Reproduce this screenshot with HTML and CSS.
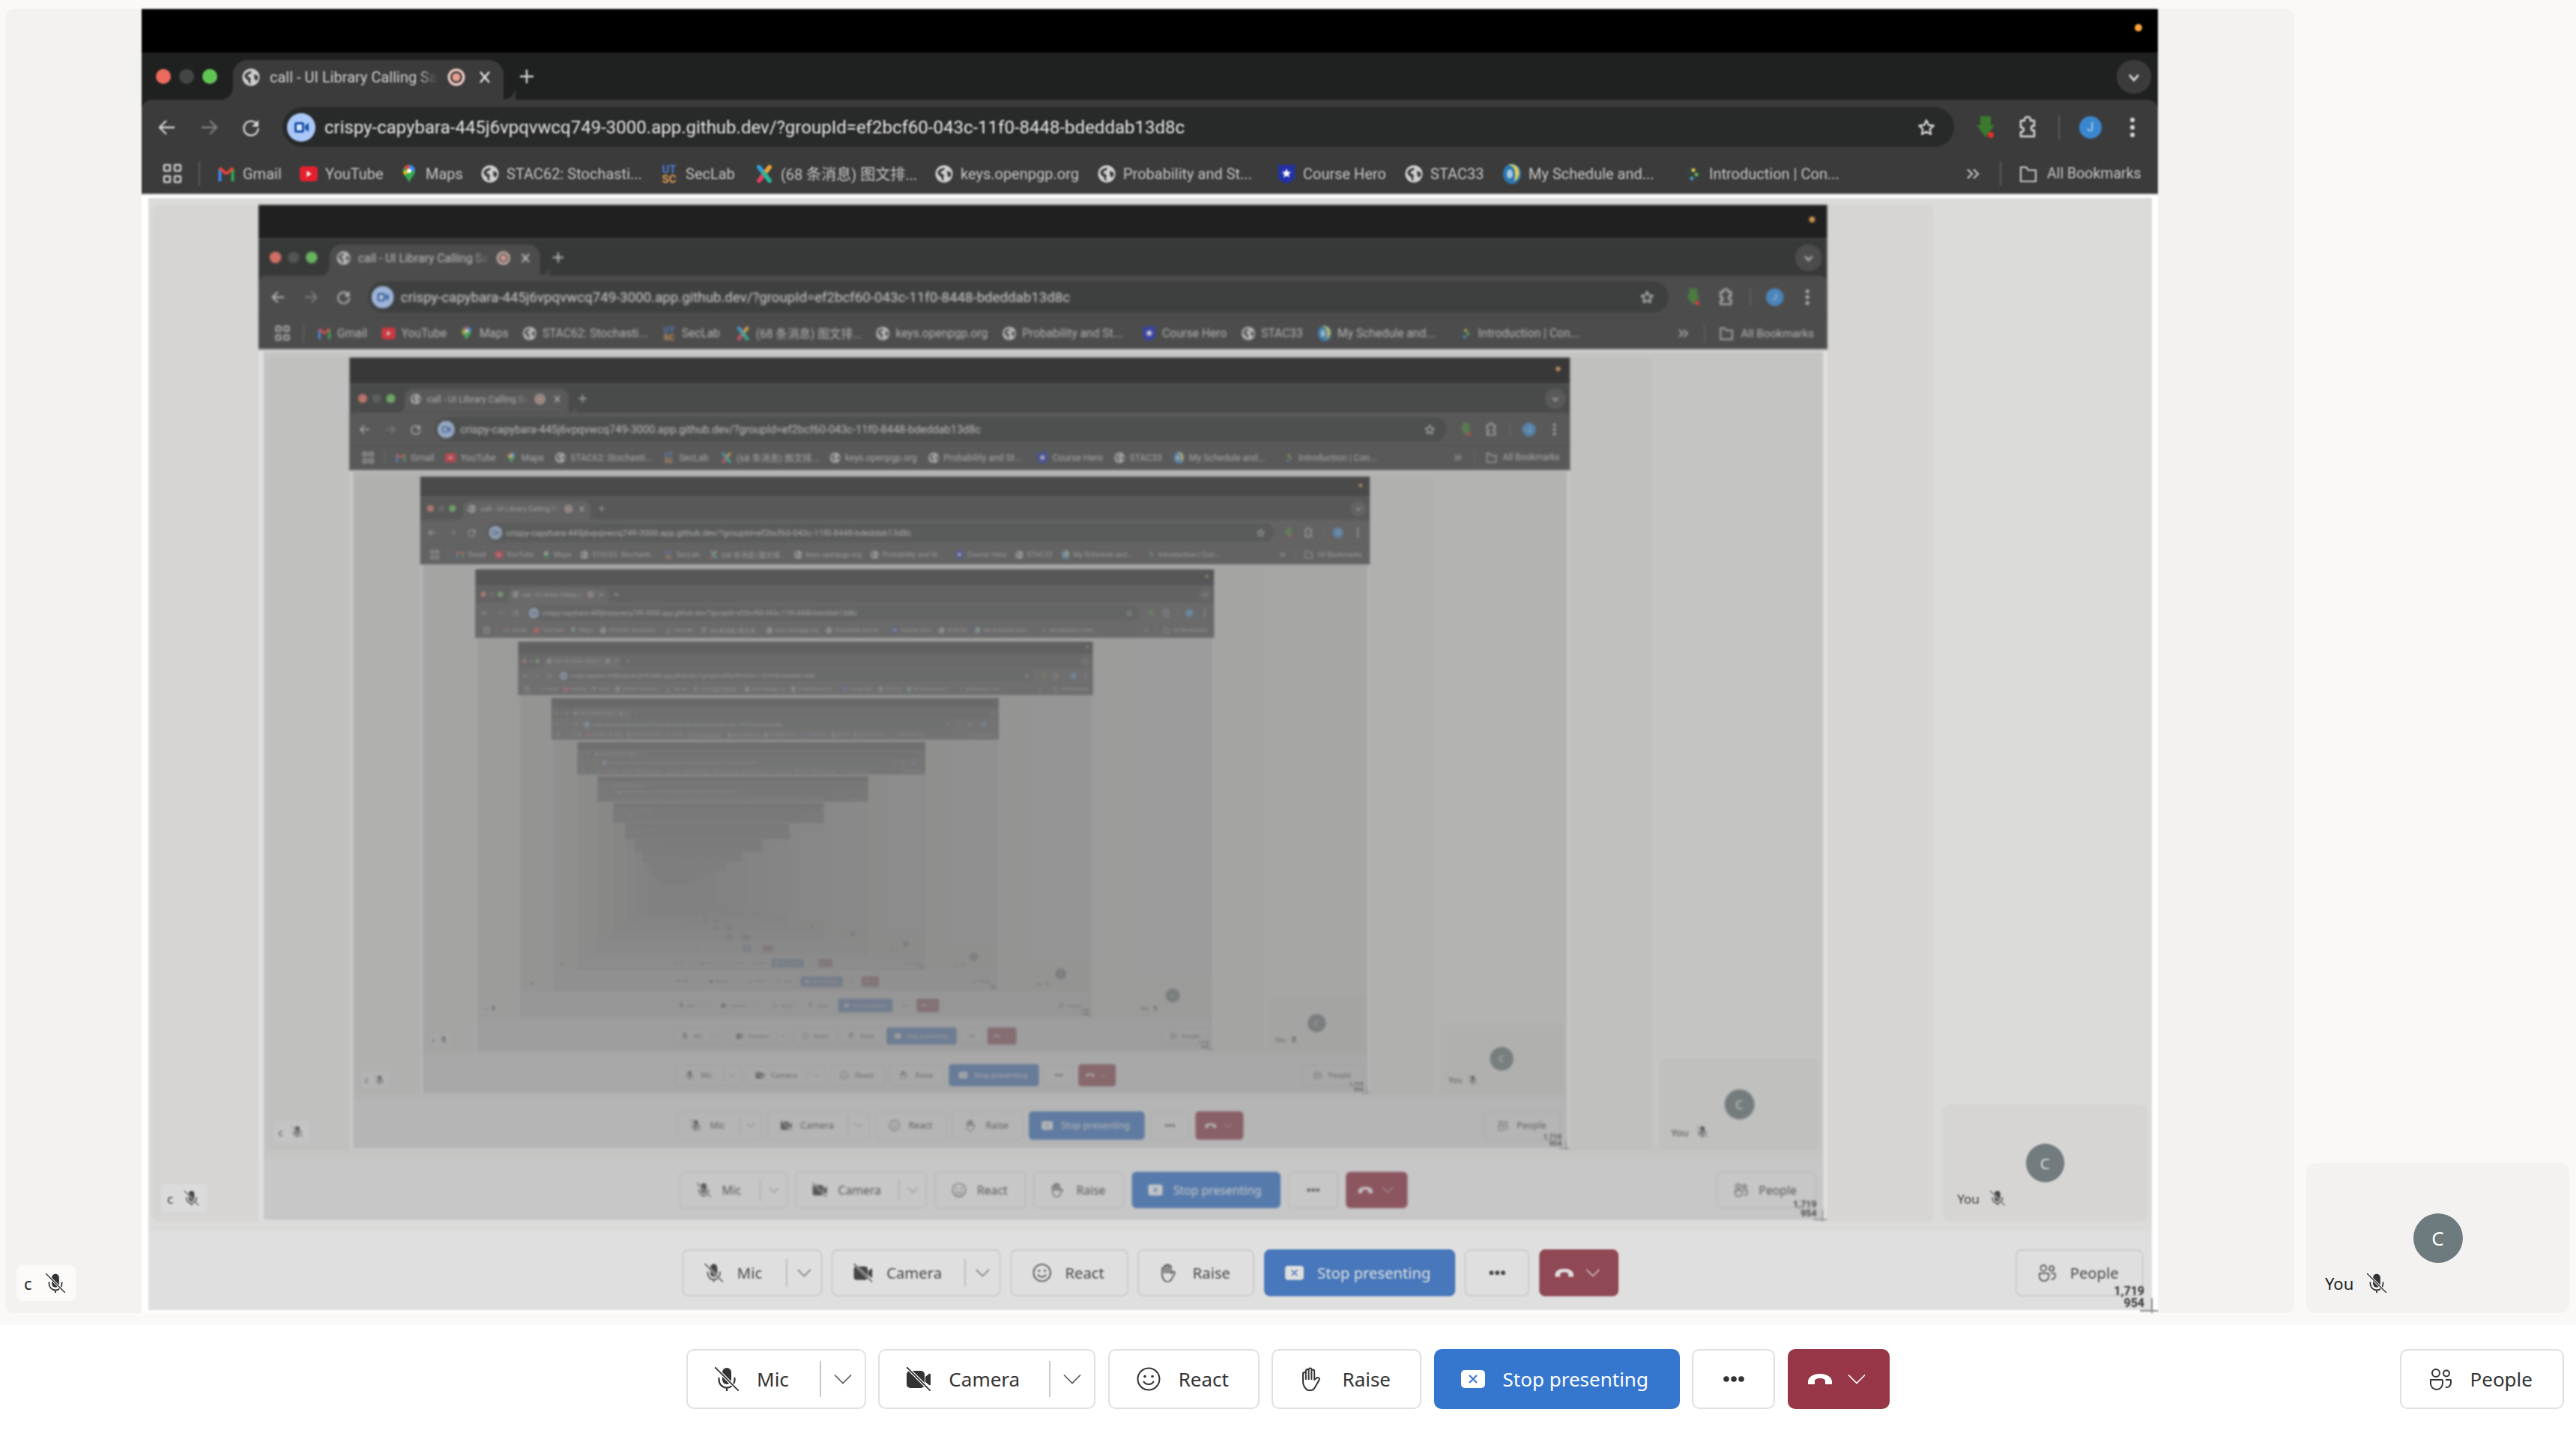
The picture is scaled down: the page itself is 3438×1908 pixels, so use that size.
FILE: index.html
```html
<!DOCTYPE html>
<html lang="en">
<head>
<meta charset="utf-8">
<title>call - UI Library Calling Sample</title>
<link rel="stylesheet" href="styles.css">
</head>
<body>
<svg class="defs" aria-hidden="true">
  <symbol id="i-mic" viewBox="0 0 32 32"><path fill="currentColor" d="M16 1a6 6 0 0 0-6 6v10a6 6 0 0 0 12 0V7a6 6 0 0 0-6-6z"/><path fill="none" stroke="currentColor" stroke-width="2.2" d="M5.5 14v3a10.500 10.500 0 0 0 21 0v-3M16 27.500V32"/><path stroke="#fff" stroke-width="4" d="M2 2l28 28"/><path stroke="currentColor" stroke-width="1.800" d="M0 0l32 32"/></symbol>
  <symbol id="i-cam" viewBox="0 0 32 32"><rect x="0" y="5" width="24" height="23" rx="5" fill="currentColor"/><path fill="currentColor" d="M25 13l5-4q2-1 2 1v13q0 2-2 1l-5-4z"/><path stroke="#fff" stroke-width="4" d="M2 2l28 28"/><path stroke="currentColor" stroke-width="1.800" d="M0 0l32 32"/></symbol>
  <symbol id="i-react" viewBox="0 0 32 32"><circle cx="16" cy="16" r="14.500" fill="none" stroke="currentColor" stroke-width="2"/><circle cx="11" cy="12.500" r="1.800" fill="currentColor"/><circle cx="21" cy="12.500" r="1.800" fill="currentColor"/><path fill="none" stroke="currentColor" stroke-width="2" stroke-linecap="round" d="M9.500 19.500c2.500 4.500 10.500 4.500 13 0"/></symbol>
  <symbol id="i-hand" viewBox="0 0 32 32"><path fill="none" stroke="currentColor" stroke-width="2" stroke-linejoin="round" d="M8 29C5 26 4 23 4 19V9a1.900 1.900 0 0 1 3.800 0V5a1.900 1.900 0 0 1 3.800 0V3.500a1.900 1.900 0 0 1 3.800 0V5.500a1.900 1.900 0 0 1 3.800 0V17l3-2.500c2-1.500 4.500.5 3.500 2.500L20 27c-1 2-3 4-6 4h-3c-1 0-2-.8-3-2zM7.800 9v8M11.600 5v12M15.400 4v13"/></symbol>
  <symbol id="i-stop" viewBox="0 0 32 32"><rect x="0" y="4" width="32" height="24" rx="5" fill="#fff"/><path fill="none" stroke="#3576cf" stroke-width="2" d="M11 11l10 10M21 11L11 21"/></symbol>
  <symbol id="i-people" viewBox="0 0 32 32"><g fill="none" stroke="currentColor" stroke-width="2"><circle cx="10" cy="8" r="5"/><circle cx="24" cy="8.500" r="4"/><path d="M3 17h15a1 1 0 0 1 1 1v4a8 8 0 0 1-16 0v-4a1 1 0 0 1 0-1z"/><path d="M23 17h6a1 1 0 0 1 1 1v3a6 6 0 0 1-7 6"/></g></symbol>
  <symbol id="i-chev" viewBox="0 0 24 14"><path fill="none" stroke="currentColor" stroke-width="1.600" d="M1 1.500l11 11 11-11"/></symbol>
  <symbol id="i-phone" viewBox="0 0 32 14"><path fill="currentColor" d="M0 14v-3C0 4 7 0 16 0s16 4 16 11v3h-9v-4c0-3-3-4-7-4s-7 1-7 4v4z"/></symbol>
  <symbol id="i-dots" viewBox="0 0 28 8"><g fill="currentColor"><circle cx="4" cy="4" r="3.800"/><circle cx="14" cy="4" r="3.800"/><circle cx="24" cy="4" r="3.800"/></g></symbol>
  <symbol id="i-globe" viewBox="0 0 24 24"><circle cx="12" cy="12" r="11.500" fill="#cfcfcf"/><path fill="#3b3b3b" d="M5 7c2-2 5-3 8-3l-1 3-3 1-2 3 3 1 2 2-1 4 1 3-3-1-1-4-3-2-2-4zM16 8l5 2 .5 4-3 3-2-3z"/></symbol>
  <symbol id="i-rec" viewBox="0 0 24 24"><circle cx="12" cy="12" r="11.500" fill="#eecac1"/><circle cx="12" cy="12" r="8" fill="#3b3b3b"/><circle cx="12" cy="12" r="5.500" fill="#e79f93"/></symbol>
  <symbol id="i-x" viewBox="0 0 24 24"><path fill="none" stroke="currentColor" stroke-width="2.400" d="M6 5l12 14M18 5L6 19"/></symbol>
  <symbol id="i-plus" viewBox="0 0 24 24"><path fill="none" stroke="currentColor" stroke-width="2.400" d="M12 3v18M3 12h18"/></symbol>
  <symbol id="i-down" viewBox="0 0 24 24"><path fill="none" stroke="currentColor" stroke-width="2.800" d="M6 9l6 7 6-7"/></symbol>
  <symbol id="i-back" viewBox="0 0 24 24"><path fill="none" stroke="currentColor" stroke-width="2.400" d="M22 12H3M11 3l-9 9 9 9"/></symbol>
  <symbol id="i-fwd" viewBox="0 0 24 24"><path fill="none" stroke="currentColor" stroke-width="2.400" d="M2 12h19M13 3l9 9-9 9"/></symbol>
  <symbol id="i-reload" viewBox="0 0 24 24"><path fill="none" stroke="currentColor" stroke-width="2.400" d="M20 8a9.500 9.500 0 1 0 1.500 5"/><path fill="currentColor" d="M22 2v9h-9z"/></symbol>
  <symbol id="i-video" viewBox="0 0 38 38"><circle cx="19" cy="19" r="19" fill="#a9c7f7"/><rect x="10" y="12" width="13" height="14" rx="2.500" fill="#174ea6"/><rect x="13" y="15" width="7" height="8" fill="#d8e6fb"/><path fill="#174ea6" d="M24 17l5-4v12l-5-4z"/></symbol>
  <symbol id="i-star" viewBox="0 0 24 24"><path fill="none" stroke="currentColor" stroke-width="2.200" stroke-linejoin="round" d="M12 2.500l2.900 6.300 6.800.8-5 4.700 1.300 6.800-6-3.400-6 3.400 1.300-6.800-5-4.700 6.800-.8z"/></symbol>
  <symbol id="i-ext" viewBox="0 0 24 30"><path fill="#3a7a2e" d="M5 0h14v12h5L12 28 0 12h5z"/><circle cx="19" cy="25" r="4" fill="#e0302a"/></symbol>
  <symbol id="i-puzzle" viewBox="0 0 24 30"><path fill="none" stroke="currentColor" stroke-width="2.400" stroke-linejoin="round" d="M3 6h5V4a4 3 0 0 1 8 0v2h5v7h-2a2 3 0 0 0 0 6h2v8H3v-6h1a3 3 0 0 0 0-6H3z"/></symbol>
  <symbol id="i-kebab" viewBox="0 0 8 28"><g fill="currentColor"><circle cx="4" cy="4" r="3"/><circle cx="4" cy="14" r="3"/><circle cx="4" cy="24" r="3"/></g></symbol>
  <symbol id="i-apps" viewBox="0 0 28 28"><g fill="none" stroke="currentColor" stroke-width="2.600"><rect x="3" y="2" width="8" height="8" rx="1"/><rect x="17" y="2" width="8" height="8" rx="1"/><rect x="3" y="17" width="8" height="8" rx="1"/><rect x="17" y="17" width="8" height="8" rx="1"/></g></symbol>
  <symbol id="i-gmail" viewBox="0 0 24 24"><g fill="none" stroke-width="4"><path stroke="#4285f4" d="M3.500 22V5"/><path stroke="#34a853" d="M20.500 22V5"/><path stroke="#ea4335" d="M3 4l9 8"/><path stroke="#ea4335" d="M21 4l-9 8"/></g></symbol>
  <symbol id="i-yt" viewBox="0 0 24 24"><rect x="0" y="2" width="24" height="20" rx="4.500" fill="#e5202e"/><path fill="#fff" d="M9.500 8l6 4-6 4z"/></symbol>
  <symbol id="i-maps" viewBox="0 0 24 24"><path fill="#34a853" d="M12 0c-5 0-8 4-8 8 0 6 6 9 8 16 2-7 8-10 8-16 0-4-3-8-8-8z"/><path fill="#4285f4" d="M12 0c5 0 8 4 8 8h-8z"/><path fill="#ea4335" d="M5 4c1.500-2.500 4-4 7-4v8z"/><path fill="#fbbc04" d="M4 8h8l-6 6c-1-2-2-4-2-6z"/><circle cx="12" cy="8" r="3" fill="#fff"/></symbol>
  <symbol id="i-xlogo" viewBox="0 0 24 24"><g fill="none" stroke-width="6" stroke-linecap="round"><path stroke="#2f9fd6" d="M5 3l7 9"/><path stroke="#e0415f" d="M12 12l-7 9"/><path stroke="#e8a23a" d="M19 3l-7 9"/><path stroke="#26b79a" d="M12 12l7 9"/></g></symbol>
  <symbol id="i-hero" viewBox="0 0 24 28"><path fill="#2230a8" d="M1 1l6 2 5-2 5 2 6-2v17c0 4-6 7-11 9C7 25 1 22 1 18z"/><path fill="#fff" d="M12 7l1.800 4.200 4.500.3-3.500 2.900 1.200 4.400-4-2.400-4 2.400 1.200-4.400-3.500-2.900 4.500-.3z"/></symbol>
  <symbol id="i-sched" viewBox="0 0 24 28"><ellipse cx="12" cy="14" rx="12" ry="13.500" fill="#2f78b5"/><path fill="#dccb55" d="M7 2c8 1 11 8 8 22 7-4 8-12 5-18-3-4-9-6-13-4z"/><ellipse cx="9" cy="14" rx="4" ry="6" fill="#a8c8de"/></symbol>
  <symbol id="i-intro" viewBox="0 0 24 24"><circle cx="12" cy="12" r="10" fill="#37413d"/><circle cx="13" cy="7" r="2.500" fill="#e6c84a"/><circle cx="17" cy="13" r="2.500" fill="#63b54f"/><circle cx="11" cy="18" r="2.500" fill="#4a90c2"/></symbol>
  <symbol id="i-folder" viewBox="0 0 24 24"><path fill="none" stroke="currentColor" stroke-width="2.200" stroke-linejoin="round" d="M2 3h7l3 4h10v15H2z"/></symbol>
  <symbol id="i-more" viewBox="0 0 24 24"><path fill="none" stroke="currentColor" stroke-width="2.200" d="M5 6l6 6-6 6M13 6l6 6-6 6"/></symbol>
</svg>

<div class="page" id="root">
  <div class="stage">
    <section class="tile tile-main">
      <div class="frame">
        <div class="menubar"><span class="orange"></span></div>
        <div class="chrome">
          <div class="tabstrip">
            <div class="lights"><span class="light red"></span><span class="light off"></span><span class="light green"></span></div>
            <div class="tab">
              <svg class="ic24"><use href="#i-globe"/></svg>
              <span class="tabtitle">call - UI Library Calling Sa</span>
              <svg class="ic24 tabrec"><use href="#i-rec"/></svg>
              <svg class="ic24 tabx"><use href="#i-x"/></svg>
            </div>
            <svg class="ic24 newtab"><use href="#i-plus"/></svg>
            <span class="tabscroll"><svg class="ic24"><use href="#i-down"/></svg></span>
          </div>
          <div class="toolbar">
            <span class="nav"><svg class="ic24"><use href="#i-back"/></svg></span>
            <span class="nav dim"><svg class="ic24"><use href="#i-fwd"/></svg></span>
            <span class="nav"><svg class="ic24"><use href="#i-reload"/></svg></span>
            <div class="omni">
              <svg class="ic38"><use href="#i-video"/></svg>
              <span class="url">crispy-capybara-445j6vpqvwcq749-3000.app.github.dev/?groupId=ef2bcf60-043c-11f0-8448-bdeddab13d8c</span>
              <svg class="ic24 omnistar"><use href="#i-star"/></svg>
            </div>
            <div class="tools">
              <span class="nav"><svg class="ic-tall"><use href="#i-ext"/></svg></span>
              <span class="nav"><svg class="ic-tall"><use href="#i-puzzle"/></svg></span>
              <span class="vsep"></span>
              <span class="profile">J</span>
              <svg class="kebab"><use href="#i-kebab"/></svg>
            </div>
          </div>
          <div class="bookmarks">
            <svg class="apps"><use href="#i-apps"/></svg>
            <span class="vsep"></span>
            <div class="marks">
              <span class="mark"><svg class="ic24"><use href="#i-gmail"/></svg>Gmail</span>
              <span class="mark"><svg class="ic24"><use href="#i-yt"/></svg>YouTube</span>
              <span class="mark"><svg class="ic24"><use href="#i-maps"/></svg>Maps</span>
              <span class="mark"><svg class="ic24"><use href="#i-globe"/></svg>STAC62: Stochasti...</span>
              <span class="mark"><svg class="ic24 seclab" viewBox="0 0 24 24"><text x="12" y="11" text-anchor="middle" class="ut">UT</text><text x="12" y="24" text-anchor="middle" class="sc">SC</text></svg>SecLab</span>
              <span class="mark"><svg class="ic24"><use href="#i-xlogo"/></svg>(68 条消息) 图文排...</span>
              <span class="mark"><svg class="ic24"><use href="#i-globe"/></svg>keys.openpgp.org</span>
              <span class="mark"><svg class="ic24"><use href="#i-globe"/></svg>Probability and St...</span>
              <span class="mark"><svg class="ic24 ic28"><use href="#i-hero"/></svg>Course Hero</span>
              <span class="mark"><svg class="ic24"><use href="#i-globe"/></svg>STAC33</span>
              <span class="mark"><svg class="ic24 ic28"><use href="#i-sched"/></svg>My Schedule and...</span>
              <span class="mark"><svg class="ic24"><use href="#i-intro"/></svg>Introduction | Con...</span>
              <svg class="ic24 overflowmark"><use href="#i-more"/></svg>
              <span class="vsep"></span>
              <span class="mark allmarks"><svg class="ic24"><use href="#i-folder"/></svg>All Bookmarks</span>
            </div>
          </div>
        </div>
        <div class="inner"><div class="slot"></div></div>
        <div class="measure">1,719<br>954</div>
      </div>
      <div class="label chip"><span>c</span><svg class="ic-label"><use href="#i-mic"/></svg></div>
    </section>
    <aside class="tile tile-you">
      <span class="avatar">C</span>
      <div class="label"><span>You</span><svg class="ic-label"><use href="#i-mic"/></svg></div>
    </aside>
  </div>
  <footer class="bar">
    <div class="controls">
      <button class="btn wide-mic"><svg class="ic32"><use href="#i-mic"/></svg>Mic<span class="split"><svg class="chev"><use href="#i-chev"/></svg></span></button>
      <button class="btn"><svg class="ic32"><use href="#i-cam"/></svg>Camera<span class="split"><svg class="chev"><use href="#i-chev"/></svg></span></button>
      <button class="btn plain"><svg class="ic32"><use href="#i-react"/></svg>React</button>
      <button class="btn plain"><svg class="ic32"><use href="#i-hand"/></svg>Raise</button>
      <button class="btn plain stop"><svg class="ic32"><use href="#i-stop"/></svg>Stop presenting</button>
      <button class="btn more"><svg class="dots"><use href="#i-dots"/></svg></button>
      <button class="btn end"><svg class="phone"><use href="#i-phone"/></svg><svg class="chev"><use href="#i-chev"/></svg></button>
    </div>
    <button class="btn plain people"><svg class="ic32"><use href="#i-people"/></svg>People</button>
  </footer>
</div>
<script src="script.js"></script>
</body>
</html>
```

FILE: styles.css
```css
* { box-sizing: border-box; }
html, body { margin: 0; background: #faf9f7; }
body { width: 3438px; height: 1908px; overflow: hidden; }
.defs { position: absolute; width: 0; height: 0; }

.page {
  width: 3438px;
  height: 1908px;
  background: #faf9f7;
  display: grid;
  grid-template-rows: 1768px 140px;
  font-family: "Noto Sans", sans-serif;
  color: #333;
  overflow: hidden;
}

.stage { display: flex; gap: 16px; padding: 12px 9px 16px 7px; min-height: 0; }
.tile { background: #f3f2f0; border-radius: 12px; position: relative; }
.tile-main { flex: 1; display: flex; justify-content: center; }
.tile-you {
  width: 351px;
  height: 200px;
  align-self: flex-end;
  display: flex;
  align-items: center;
  justify-content: center;
}
.avatar {
  width: 66px;
  height: 66px;
  border-radius: 50%;
  background: #6d7a7e;
  color: #fff;
  font-size: 26px;
  display: flex;
  align-items: center;
  justify-content: center;
}
.label {
  position: absolute;
  left: 15px;
  bottom: 16px;
  height: 48px;
  padding: 0 14px 0 10px;
  display: flex;
  align-items: center;
  gap: 18px;
  border-radius: 8px;
  font-size: 22px;
  color: #242424;
}
.chip { background: #fbfaf9; }
.ic-label { width: 26px; height: 26px; color: #333; }

/* the shared window */
.frame {
  width: 2691px;
  height: 1740px;
  flex: none;
  background: #fff;
  position: relative;
  display: flex;
  flex-direction: column;
  filter: blur(0.8px);
  font-family: Roboto, sans-serif;
}
.frame .frame { filter: blur(1.2px); }
.menubar {
  height: 58px;
  background: #000;
  display: flex;
  justify-content: flex-end;
  padding: 20px 21px 0 0;
}
.orange { width: 10px; height: 10px; border-radius: 50%; background: #f5a53c; }

.chrome { background: #1f2120; height: 190px; color: #d2d2d2; border-bottom: 2px solid #b0b0b0; }
.tabstrip { height: 63px; display: flex; padding: 10px 9px 0 19px; }
.lights { display: flex; gap: 11px; padding-top: 12px; margin-right: 21px; }
.light { width: 20px; height: 20px; border-radius: 50%; }
.red { background: #ec6a5e; }
.off { background: #434544; }
.green { background: #61c554; }
.tab {
  width: 361px;
  height: 53px;
  background: #3b3b3b;
  border-radius: 20px 20px 0 0;
  display: flex;
  align-items: center;
  padding: 0 13px 8px 12px;
  font-size: 20px;
  position: relative;
}
.tab::before, .tab::after {
  content: "";
  position: absolute;
  bottom: 0;
  width: 16px;
  height: 16px;
  background: radial-gradient(circle at 0 0, #1f2120 15.500px, #3b3b3b 16px);
}
.tab::before { left: -16px; }
.tab::after { right: -16px; transform: scaleX(-1); background: radial-gradient(circle at 100% 0, #1f2120 15.500px, #3b3b3b 16px); }
.ic24 { width: 24px; height: 24px; flex: none; }
.ic28 { height: 28px; }
.tabtitle {
  margin-left: 13px;
  white-space: nowrap;
  -webkit-mask-image: linear-gradient(to right, #000 88%, transparent);
  mask-image: linear-gradient(to right, #000 88%, transparent);
}
.tabrec { margin-left: auto; }
.tabx { margin-left: 14px; color: #e8e8e8; }
.newtab { margin: 10px 0 0 19px; color: #d6d6d6; }
.tabscroll {
  margin-left: auto;
  width: 46px;
  height: 45px;
  border-radius: 22px;
  background: #3b3b3b;
  display: flex;
  align-items: center;
  justify-content: center;
}

.toolbar {
  height: 72px;
  background: #3b3b3b;
  border-radius: 14px 14px 0 0;
  display: flex;
  align-items: center;
  padding: 9px 0 8px 6px;
}
.nav { width: 56px; flex: none; display: flex; justify-content: center; align-items: center; }
.dim { opacity: .45; }
.omni {
  flex: 1;
  min-width: 0;
  height: 53px;
  margin-left: 14px;
  background: #282a29;
  border-radius: 27px;
  display: flex;
  align-items: center;
  padding: 0 25px 0 6px;
}
.ic38 { width: 38px; height: 38px; flex: none; }
.url { margin-left: 12px; font-size: 24px; color: #e6e6e6; white-space: nowrap; }
.omnistar { margin-left: auto; color: #e0e0e0; }
.tools { width: 272px; flex: none; display: flex; align-items: center; padding-left: 14px; color: #dcdcdc; }
.ic-tall { width: 24px; height: 30px; }
.vsep { width: 2px; height: 32px; background: #5a5a5a; flex: none; }
.tools .vsep { margin-left: 13px; }
.profile {
  width: 30px;
  height: 30px;
  margin-left: 26px;
  border-radius: 50%;
  background: #3a87cf;
  color: #bcd9f2;
  font-size: 16px;
  display: flex;
  align-items: center;
  justify-content: center;
}
.kebab { width: 8px; height: 28px; margin-left: 37px; }

.bookmarks {
  height: 53px;
  background: #3b3b3b;
  display: flex;
  align-items: center;
  padding-left: 27px;
  color: #c6c6c6;
  font-size: 20px;
}
.apps { width: 28px; height: 28px; flex: none; margin-right: 21px; }
.marks {
  flex: 1;
  margin-left: 23px;
  display: grid;
  grid-template-columns: 110px 134px 108px 239px 127px 240px 217px 240px 170px 131px 241px 374px 48px 26px auto;
  align-items: center;
}
.mark { display: flex; align-items: center; gap: 10px; white-space: nowrap; font-family: Roboto, "Noto Sans CJK SC", sans-serif; }
.overflowmark { color: #c6c6c6; }
.allmarks { gap: 13px; font-size: 19.500px; }
.seclab { overflow: visible; }
.seclab .ut { font: 700 15px Roboto, sans-serif; fill: #4a78d8; }
.seclab .sc { font: 700 15px Roboto, sans-serif; fill: #e09a50; }

/* the page seen through the shared window */
.inner {
  width: 2674px;
  height: 1484px;
  margin: 4px 0 0 9px;
  background: #858585;
  overflow: hidden;
  filter: contrast(.75);
}
.slot { width: 3438px; height: 1908px; transform: scale(.778, .7795); transform-origin: 0 0; }

.measure {
  position: absolute;
  right: 18px;
  bottom: 5px;
  font-size: 16px;
  line-height: 16px;
  font-weight: 700;
  text-align: right;
  color: #333;
}
.measure::before {
  content: "";
  position: absolute;
  left: calc(100% + 9px);
  bottom: -5px;
  width: 2px;
  height: 20px;
  background: #888;
}
.measure::after {
  content: "";
  position: absolute;
  left: calc(100% - 6px);
  bottom: -3px;
  width: 24px;
  height: 2px;
  background: #888;
}

/* call controls */
.bar {
  background: #fff;
  display: grid;
  grid-template-columns: 1fr auto 1fr;
  align-items: start;
  padding: 32px 16px 0;
}
.controls { grid-column: 2; display: flex; gap: 16.500px; }
.btn {
  height: 80px;
  background: #fff;
  border: 2px solid #e0e0e0;
  border-radius: 10px;
  display: flex;
  align-items: center;
  gap: 24px;
  padding: 0 0 0 36px;
  font: 400 26px "Noto Sans", sans-serif;
  color: #333;
}
.plain { padding-right: 39px; }
.ic32 { width: 32px; height: 32px; flex: none; }
.split {
  width: 60px;
  height: 48px;
  margin-left: 15px;
  border-left: 2px solid #c8c8c8;
  display: flex;
  align-items: center;
  justify-content: center;
  color: #555;
}
.wide-mic .split { margin-left: 17px; }
.chev { width: 24px; height: 14px; flex: none; }
.stop { background: #3576cf; border-color: #3576cf; color: #fff; padding-left: 34px; padding-right: 40px; }
.more { width: 111px; padding: 0; justify-content: center; }
.dots { width: 28px; height: 8px; }
.end {
  width: 136px;
  background: #963646;
  border-color: #963646;
  color: #fff;
  padding-left: 25px;
  gap: 21px;
}
.phone { width: 32px; height: 14px; }
.people { grid-column: 3; justify-self: end; padding-right: 40px; }
```

FILE: script.js
```js
// The shared window shows this same page, which shows itself again.
// From the ninth copy on the words are far too small to draw, so only the shapes stay.
var root = document.getElementById('root');
var blank = root.cloneNode(true);
blank.removeAttribute('id');

function dropWords(el) {
  var walker = document.createTreeWalker(el, NodeFilter.SHOW_TEXT);
  var nodes = [];
  while (walker.nextNode()) nodes.push(walker.currentNode);
  nodes.forEach(function (n) { n.remove(); });
}

var host = root.querySelector('.slot');
for (var i = 0; i < 16; i++) {
  var copy = blank.cloneNode(true);
  if (i >= 8) dropWords(copy);
  host.appendChild(copy);
  host = copy.querySelector('.slot');
}
```
